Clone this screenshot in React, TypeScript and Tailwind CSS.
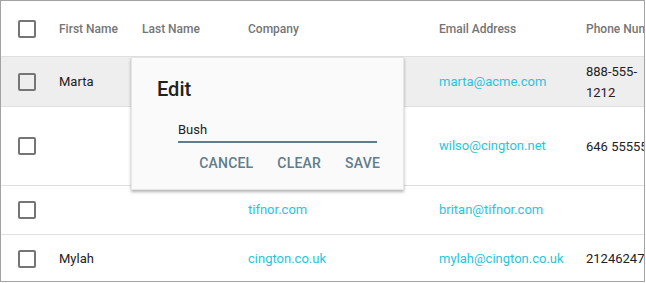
import React from 'react';

const rows = [
  { first: 'Marta', last: '', company: '', email: 'marta@acme.com', phone: '888-555-1212', h: 'h-[50px]', bg: 'bg-[#eeeeee]' },
  { first: '', last: '', company: '', email: 'wilso@cington.net', phone: '646 5555555', h: 'h-[79px]', bg: '' },
  { first: '', last: '', company: 'tifnor.com', email: 'britan@tifnor.com', phone: '', h: 'h-[49px]', bg: '' },
  { first: 'Mylah', last: '', company: 'cington.co.uk', email: 'mylah@cington.co.uk', phone: '2124624700', h: 'h-[47px]', bg: '' },
];

function Checkbox() {
  return <div className="w-[18px] h-[18px] border-2 border-[#757575] rounded-[2px]" />;
}

export default function App() {
  return (
    <div className="w-[645px] h-[282px] border border-[#a3a3a3] bg-white overflow-hidden relative" style={{ fontFamily: 'Roboto, "Liberation Sans", sans-serif' }}>
      {/* header */}
      <div className="flex items-center h-[56px] border-b border-[#e0e0e0] text-[12px] font-medium text-[#757575] whitespace-nowrap">
        <div className="w-[58px] shrink-0 pl-[17px]"><Checkbox /></div>
        <div className="w-[83px] shrink-0">First Name</div>
        <div className="w-[106px] shrink-0">Last Name</div>
        <div className="w-[191px] shrink-0">Company</div>
        <div className="w-[147px] shrink-0">Email Address</div>
        <div className="w-[80px] shrink-0">Phone Number</div>
      </div>

      {rows.map((r, i) => (
        <div key={i} className={`flex items-center ${r.h} ${r.bg} ${i < rows.length - 1 ? 'border-b border-[#e0e0e0]' : ''} text-[13px] text-[#212121]`}>
          <div className="w-[58px] shrink-0 pl-[17px]"><Checkbox /></div>
          <div className="w-[83px] shrink-0">{r.first}</div>
          <div className="w-[106px] shrink-0">{r.last}</div>
          <div className="w-[191px] shrink-0 text-[#26c6da]">{r.company}</div>
          <div className="w-[147px] shrink-0 text-[#26c6da]">{r.email}</div>
          <div className={`w-[64px] shrink-0 leading-[21px] ${i === 0 ? '' : 'whitespace-nowrap'}`}>
            {i === 0 ? <>888-555-<br />1212</> : r.phone}
          </div>
        </div>
      ))}

      {/* edit popup */}
      <div className="absolute left-[130px] top-[56px] w-[273px] h-[133px] bg-[#fafafa] border border-[#e6e6e6] shadow-[0_2px_3px_rgba(0,0,0,0.3)] pt-[17px]">
        <div className="pl-[25px] text-[20px] leading-[28px] font-medium text-[#212121]">Edit</div>
        <div className="ml-[46px] mt-[16px] w-[199px] h-[24px] border-b-2 border-[#607d8b] text-[13px] leading-[22px] text-[#212121]">Bush</div>
        <div className="flex justify-end gap-[24px] pr-[23px] mt-[10px] text-[14px] leading-[20px] font-medium text-[#607d8b] tracking-[0.2px]">
          <span>CANCEL</span>
          <span>CLEAR</span>
          <span>SAVE</span>
        </div>
      </div>
    </div>
  );
}
